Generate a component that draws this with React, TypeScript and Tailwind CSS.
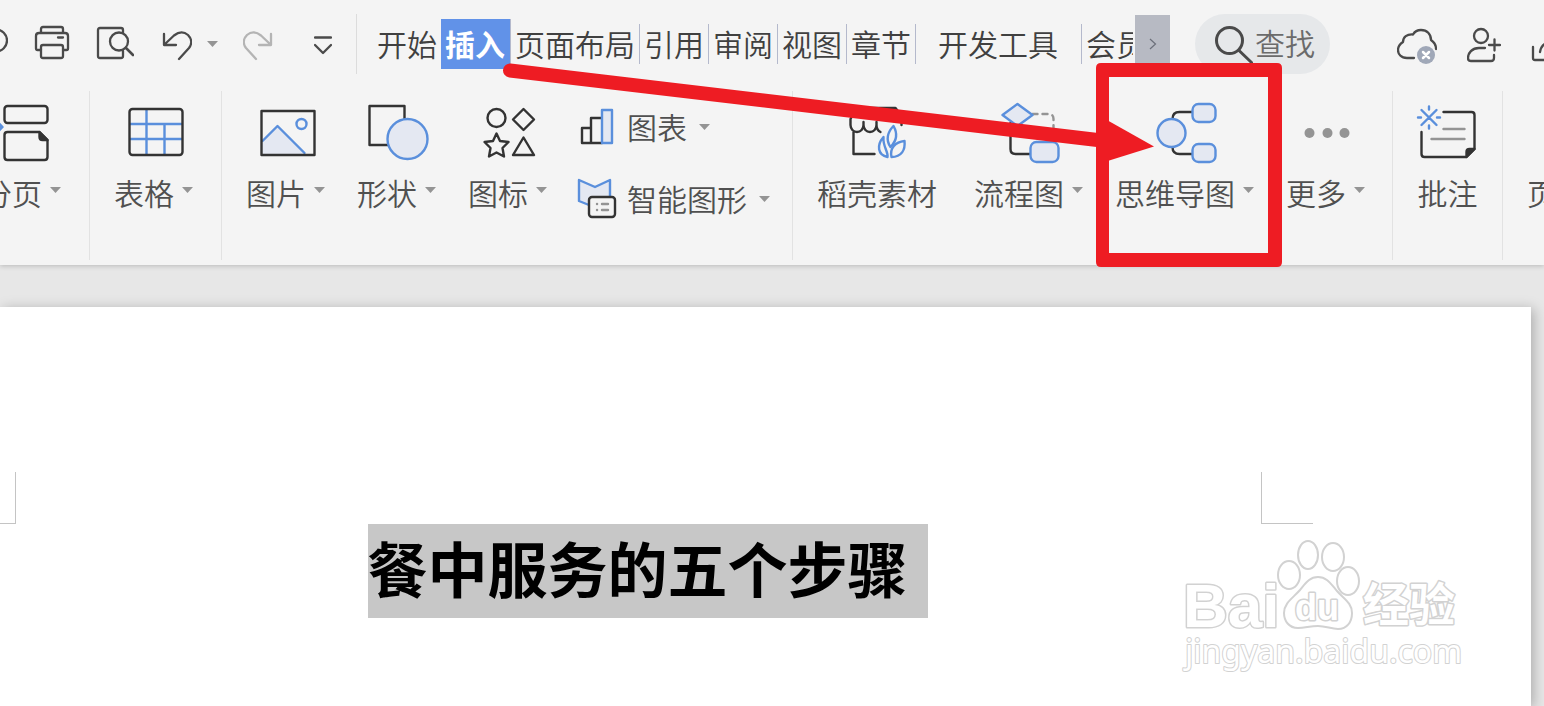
import type { ReactNode } from "react"

const INK = "#333333"
const DARK = "#4a4a4a"
const BLUE = "#5a8fdc"
const TINT = "#e4e8f2"
const GRAY = "#949494"

function Caret() {
  return (
    <svg width="11" height="6" viewBox="0 0 11 6" className="shrink-0">
      <path d="M0 0h11L5.5 6z" fill={GRAY} />
    </svg>
  )
}

function BarIcon({ width, color = DARK, children }: { width: number; color?: string; children: ReactNode }) {
  return (
    <svg
      width={width}
      height="40"
      viewBox={`0 0 ${width} 40`}
      fill="none"
      stroke={color}
      strokeWidth="2.3"
      strokeLinecap="round"
      strokeLinejoin="round"
      className="block shrink-0"
    >
      {children}
    </svg>
  )
}

function ToolIcon({ children }: { children: ReactNode }) {
  return (
    <svg
      width="63"
      height="64"
      viewBox="0.500 0 63 64"
      fill="none"
      stroke={INK}
      strokeWidth="2.4"
      strokeLinecap="round"
      strokeLinejoin="round"
      className="block shrink-0 overflow-visible"
    >
      {children}
    </svg>
  )
}

function Tool({ label, caret = true, children }: { label: string; caret?: boolean; children: ReactNode }) {
  return (
    <button className="flex shrink-0 flex-col items-center">
      <ToolIcon>{children}</ToolIcon>
      <span className="mt-3 flex items-center gap-2 text-[30px] leading-[30px] font-[350] whitespace-nowrap">
        {label}
        {caret && (
          <span className="pb-1">
            <Caret />
          </span>
        )}
      </span>
    </button>
  )
}

function SmallTool({ label, children }: { label: string; children: ReactNode }) {
  return (
    <button className="flex h-10 items-center gap-3 text-[30px] leading-[30px] font-[350] whitespace-nowrap">
      <svg
        width="36"
        height="40"
        viewBox="0 0 36 40"
        fill="none"
        stroke={INK}
        strokeWidth="2.4"
        strokeLinecap="round"
        strokeLinejoin="round"
        className="block shrink-0 overflow-visible"
      >
        {children}
      </svg>
      <span className="pb-0.5">{label}</span>
      <Caret />
    </button>
  )
}

function QuickAccess() {
  return (
    <div className="flex h-15 shrink-0 items-center border-r border-[#dcdcdc] pr-6">
      <button aria-label="保存">
        <BarIcon width={8}>
          <circle cx="-4" cy="16.5" r="11" />
        </BarIcon>
      </button>
      <button aria-label="打印" className="ml-[26px]">
        <BarIcon width={36}>
          <path d="M7 8V5q0-2 2-2h18q2 0 2 2v3" />
          <path d="M7 26H3.500q-1.500 0-1.500-1.500V12q0-3 3-3h26q3 0 3 3v12.500q0 1.500-1.500 1.500H30" />
          <path d="M7 23q0-2 2-2h18q2 0 2 2v9q0 2-2 2H9q-2 0-2-2zM24 13.500h5" />
        </BarIcon>
      </button>
      <button aria-label="打印预览" className="ml-[26px]">
        <BarIcon width={38}>
          <path d="M27 9V6q0-2-2-2H4q-2 0-2 2v26q0 2 2 2h21q2 0 2-2v-5" />
          <circle cx="23" cy="17.500" r="9" />
          <path d="M30 24l7 7" strokeWidth="2.600" />
        </BarIcon>
      </button>
      <button aria-label="撤销" className="ml-7">
        <BarIcon width={30}>
          <path d="M2 10v11h12M3 20l9-8.500c5-4 10-4 14-.5 4 4 4 9 1 13L17 35" />
        </BarIcon>
      </button>
      <button aria-label="撤销列表" className="ml-[15px]">
        <Caret />
      </button>
      <button aria-label="恢复" className="ml-[25px]">
        <BarIcon width={30} color="#b4b4b4">
          <path d="M28 10v11H16M27 20l-9-8.500c-5-4-10-4-14-.5-4 4-4 9-1 13l10 11" />
        </BarIcon>
      </button>
      <button aria-label="自定义快速访问工具栏" className="ml-[41px]">
        <BarIcon width={18}>
          <path d="M1 13.500h16M1 21l8 8 8-8" />
        </BarIcon>
      </button>
    </div>
  )
}

const tabs = ["页面布局", "引用", "审阅", "视图", "章节"]

function Tabs() {
  return (
    <nav className="ml-4 flex shrink-0 items-center text-[30px] leading-[38px] font-[350] whitespace-nowrap text-[#404040]">
      <button className="h-10 px-1 pb-0.5">开始</button>
      <button className="h-[50px] border-r border-[#b4b9cc] bg-[#6192e8] pr-[5px] pb-0.5 pl-1 font-bold text-white">
        插入
      </button>
      {tabs.map((tab) => (
        <button key={tab} className="h-10 border-r border-[#b4b9cc] px-1 pb-0.5">
          {tab}
        </button>
      ))}
      <button className="h-10 border-r border-[#b4b9cc] pr-[23px] pb-0.5 pl-[22px]">开发工具</button>
      <button className="h-10 w-[51px] overflow-hidden pb-0.5 pl-1 text-left">会员专享</button>
      <button aria-label="更多选项卡" className="ml-0.5 flex h-[58px] w-[35px] items-center justify-center bg-[#b7bac3]">
        <svg width="8" height="12" viewBox="0 0 8 12" fill="none" stroke="#6b6f7a" strokeWidth="1.200">
          <path d="M1 1l5.500 5L1 11" />
        </svg>
      </button>
    </nav>
  )
}

function TopBar() {
  return (
    <div className="flex h-22 items-center overflow-hidden">
      <QuickAccess />
      <Tabs />
      <label className="ml-[25px] flex h-15 shrink-0 items-center rounded-full bg-[#e6e8ea] pr-[15px] pl-[18px]">
        <svg width="42" height="40" viewBox="0 0 42 40" fill="none" stroke={DARK} strokeWidth="3" strokeLinecap="round">
          <circle cx="16.500" cy="16.500" r="13" />
          <path d="M26 26.500l12.500 12" />
        </svg>
        <input
          type="text"
          aria-label="查找"
          placeholder="查找"
          className="h-11 w-[60px] bg-transparent pb-1 text-[30px] font-[350] outline-none placeholder:text-[#6b6b6b]"
        />
      </label>
      <div className="ml-auto flex shrink-0 items-center gap-[30px]">
        <button aria-label="云同步">
          <BarIcon width={40}>
            <path d="M17 34h-7C4 34 1 30 1 26c0-4 2-6 5-8 0-5 4-8 10-7.500C18 7 21 6 24 6c6 0 10 4 10 10 3 2 5 5 5 9" />
            <circle cx="29" cy="31" r="9" fill="#a0a8b8" stroke="none" />
            <path d="M26 28l6 6M32 28l-6 6" stroke="#fff" strokeWidth="2.500" />
          </BarIcon>
        </button>
        <button aria-label="添加协作者">
          <BarIcon width={34}>
            <circle cx="14" cy="12" r="7" />
            <path d="M18 24h-6C5 24 1 29 1 34q0 3 3 3h20q3 0 3-3v-3M27.500 15.500v11M22 21h11" />
          </BarIcon>
        </button>
        <button aria-label="分享" className="w-[13px] overflow-hidden">
          <BarIcon width={40}>
            <path d="M2 23v11q0 2 2 2h30q2 0 2-2V23M9 28c1-6 4-9 10-10h7M22 8l10 10-10 9" />
          </BarIcon>
        </button>
      </div>
    </div>
  )
}

function Ribbon() {
  const group = "flex h-[169px] shrink-0 items-start gap-8 border-r border-[#e2e2e2] pt-2.5"
  return (
    <div className="flex overflow-hidden pt-[3px] pb-[5px] text-[#505050]">
      <div className={`${group} w-[90px] justify-end overflow-hidden pr-7`}>
        <Tool label="分页">
          <rect x="15" y="5" width="43" height="17" rx="3" />
          <path d="M18 31h32l8 8v17q0 3-3 3H18q-3 0-3-3V34q0-3 3-3z" />
          <path d="M50 31v5q0 3 3 3h5z" fill={INK} />
          <path d="M7 20l6 6-6 6z" fill={BLUE} stroke={BLUE} />
        </Tool>
      </div>

      <div className={`${group} pr-7 pl-6`}>
        <Tool label="表格">
          <path d="M25 9v44M43 23v30M9 23h51M9 38h51" stroke={BLUE} />
          <rect x="8" y="8" width="53" height="46" rx="3" />
        </Tool>
      </div>

      <div className={`${group} pr-[22px] pl-6`}>
        <Tool label="图片">
          <path d="M8 40l16-15 28 28H8z" fill={TINT} stroke="none" />
          <path d="M9 40l15-15 27 27" stroke={BLUE} />
          <circle cx="48" cy="23" r="5" stroke={BLUE} />
          <rect x="8" y="10" width="53" height="44" />
        </Tool>
        <Tool label="形状">
          <path d="M24 44H5V5h35v14" />
          <circle cx="43" cy="38" r="20" fill={TINT} stroke={BLUE} />
        </Tool>
        <Tool label="图标">
          <circle cx="21" cy="17" r="9" />
          <path d="M48 8l10.500 10.500L48 29 37.500 18.500z" />
          <path d="M21 32.500l3.500 7.500 8.500 1-6 6 1.500 8.500L21 51.500l-7.500 4L15 47l-6-6 8.500-1z" />
          <path d="M48 36.500L58.500 54h-21z" />
        </Tool>
        <div className="flex flex-col gap-8 pt-1.5">
          <SmallTool label="图表">
            <path d="M3 21h9v15H3zM12 36V11h10M12 36h11" />
            <rect x="23" y="3" width="10" height="33" fill={TINT} stroke={BLUE} />
          </SmallTool>
          <SmallTool label="智能图形">
            <path d="M10 26L0 22V1l16 7 15-7v17z" fill={TINT} stroke="none" />
            <path d="M10 26L0 22V1l16 7 15-7v16" stroke={BLUE} />
            <rect x="10" y="18" width="26" height="20" rx="3" fill="#f4f4f4" />
            <path d="M18 25h.1M18 31h.1M23 25h6M23 31h6" stroke={GRAY} />
          </SmallTool>
        </div>
      </div>

      <div className={`${group} pr-[27px] pl-6`}>
        <div className="pr-[5px]">
          <Tool label="稻壳素材" caret={false}>
            <path d="M56 24V15l-6-8H11L5 18v6a6.500 7 0 0 0 13 0 6.500 7 0 0 0 13 0q0 5 4 7M18 24v-3M31 24v-3M8 31v22h21" />
            <path d="M48 25c-6 6-8 14-3 21 7-7 7-14 3-21z" stroke={BLUE} />
            <path d="M38 36c-7 8-6 18 4 20 1-5-5-11-4-20z" stroke={BLUE} />
            <path d="M59 40c-9 1-15 7-13 16 10 0 14-7 13-16z" stroke={BLUE} />
          </Tool>
        </div>
        <Tool label="流程图">
          <path d="M36 13h16q5 0 5 5v22" stroke={GRAY} strokeDasharray="5 5" />
          <path d="M14 22v26q0 5 5 5h14" />
          <path d="M21 3l15 11-15 11L6 14z" fill={TINT} stroke={BLUE} />
          <rect x="34" y="41" width="28" height="20" rx="6" fill={TINT} stroke={BLUE} />
        </Tool>
        <Tool label="思维导图">
          <path d="M20 18q0-7 7-7h12M20 46q0 7 7 7h12" />
          <circle cx="19" cy="32" r="14" fill={TINT} stroke={BLUE} />
          <rect x="40" y="3" width="23" height="18" rx="6" fill={TINT} stroke={BLUE} />
          <rect x="40" y="43" width="23" height="18" rx="6" fill={TINT} stroke={BLUE} />
        </Tool>
        <Tool label="更多">
          <g fill={GRAY} stroke="none">
            <circle cx="16" cy="32" r="5" />
            <circle cx="34" cy="32" r="5" />
            <circle cx="51" cy="32" r="5" />
          </g>
        </Tool>
      </div>

      <div className={`${group} px-[23px]`}>
        <Tool label="批注" caret={false}>
          <path d="M28 11h28q3 0 3 3v34l-8 8H9q-3 0-3-3V31" />
          <path d="M59 48h-5q-3 0-3 3v5z" fill={INK} />
          <path d="M28 28h21M16 38h33" stroke={GRAY} />
          <path d="M6 9l15 15M21 9L6 24M13.500 5.500v3M13.500 24.500v3M2.500 16.500h3M21.500 16.500h3" stroke={BLUE} />
        </Tool>
      </div>

      <div className={`${group} pl-6`}>
        <Tool label="页眉页脚" caret={false}>
          <rect x="10" y="5" width="44" height="54" rx="3" />
          <path d="M18 15h28M18 49h28" stroke={BLUE} />
        </Tool>
      </div>
    </div>
  )
}

function Watermark() {
  return (
    <svg
      width="290"
      height="140"
      viewBox="0 0 290 140"
      className="absolute right-[66px] bottom-[30px]"
      fill="#ffffff"
      stroke="#d2d2d2"
      strokeWidth="2"
      strokeLinejoin="round"
    >
      <ellipse cx="114" cy="39" rx="11" ry="14" />
      <ellipse cx="133" cy="19" rx="10" ry="14" />
      <ellipse cx="158" cy="21" rx="11" ry="14" />
      <ellipse cx="173" cy="45" rx="11" ry="14" />
      <path d="M143 41c-9 0-13 7-18 13-7 8-16 13-16 23 0 8 5 15 14 15 7 0 12-2 20-2s13 3 20 3c9 0 14-7 14-16 0-10-8-14-15-22-6-7-10-14-19-14z" />
      <g fontFamily="'Liberation Sans', 'Noto Sans CJK SC', sans-serif" fontWeight="700" strokeWidth="3" paintOrder="stroke">
        <text x="8" y="91" fontSize="62">
          Bai
        </text>
        <text x="120" y="84" fontSize="36">
          du
        </text>
        <text x="188" y="85" fontSize="46">
          经验
        </text>
      </g>
      <text x="10" y="127" fontSize="32" fontFamily="'Noto Sans', sans-serif" paintOrder="stroke">
        jingyan.baidu.com
      </text>
    </svg>
  )
}

// red highlight box and the arrow pointing at 思维导图
function Annotation() {
  return (
    <svg width="1544" height="280" viewBox="0 0 1544 280" className="pointer-events-none absolute top-0 left-0" fill="#ee1c23">
      <path d="M510 70.500L1106 141" stroke="#ee1c23" strokeWidth="14" strokeLinecap="round" />
      <path d="M1098 115l56 31.500-56 17.500z" />
      <path
        fillRule="evenodd"
        d="M1101 63h176q5 0 5 5v194q0 5-5 5h-176q-5 0-5-5V68q0-5 5-5zM1109 77v176h159V77z"
      />
    </svg>
  )
}

export default function App() {
  return (
    <div className="relative flex min-h-screen flex-col overflow-hidden bg-[#e7e7e7] font-['Noto_Sans_CJK_SC',sans-serif]">
      <header className="bg-[#f4f4f4] shadow-[0_1px_5px_rgba(0,0,0,0.2)]">
        <TopBar />
        <Ribbon />
      </header>

      <main className="relative mt-[42px] mr-[13px] flex-1 bg-white shadow-[3px_2px_12px_rgba(0,0,0,0.25)]">
        <div className="flex justify-between pt-[165px] pr-[218px]">
          <div className="h-[52px] w-4 border-r border-b border-[#c4c4c4]" />
          <div className="h-[52px] w-[52px] border-b border-l border-[#c4c4c4]" />
        </div>
        <div className="mr-[270px] ml-4 flex justify-center pl-[18px]">
          <h1 className="bg-[#c7c7c7] pr-5 pb-2 text-[60px] leading-[86px] font-bold whitespace-nowrap text-black">
            餐中服务的五个步骤
          </h1>
        </div>
        <Watermark />
      </main>

      <Annotation />
    </div>
  )
}
